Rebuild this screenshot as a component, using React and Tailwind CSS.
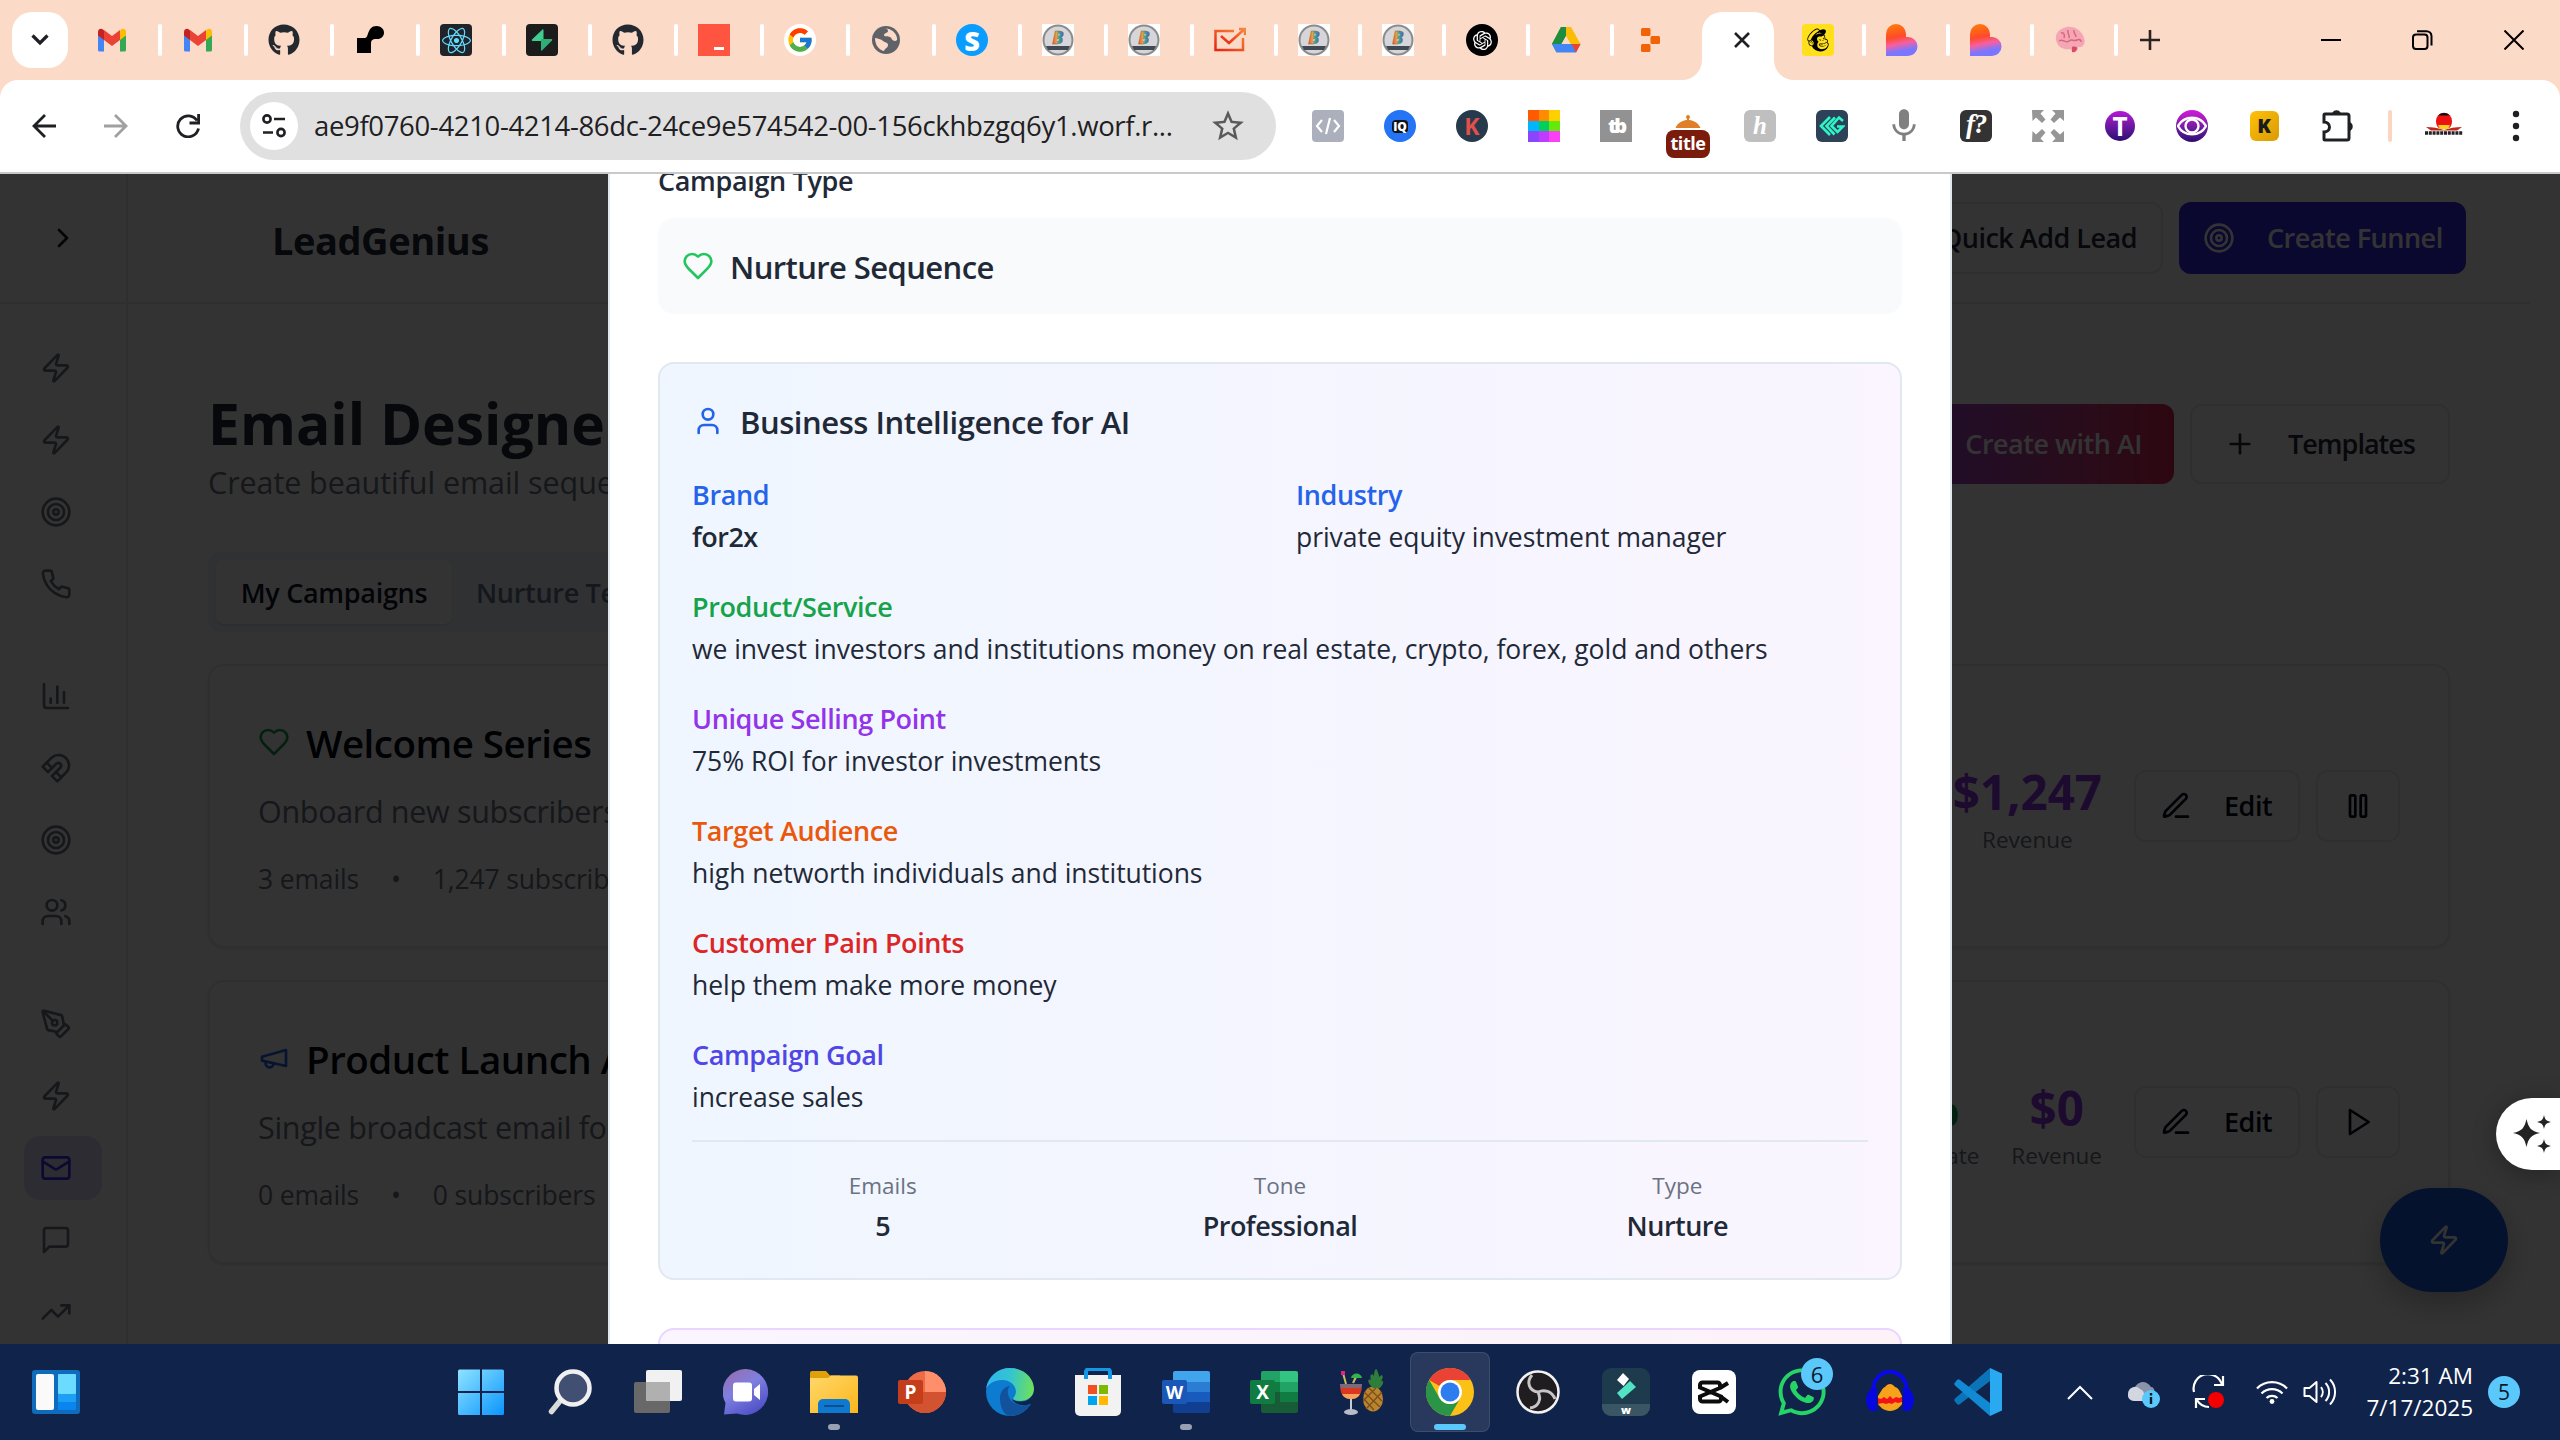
import React from "react";
import { FaGithub, FaReact, FaMailchimp, FaWhatsapp } from "react-icons/fa";
import { FcGoogle } from "react-icons/fc";
import { RiOpenaiFill } from "react-icons/ri";
import { MdMic, MdStarBorder } from "react-icons/md";

/* ---------- stroke icons ---------- */
function Icon({ children, size = 32, className = "", sw = 2 }) {
  return (
    <svg width={size} height={size} viewBox="0 0 24 24" fill="none" stroke="currentColor" strokeWidth={sw} strokeLinecap="round" strokeLinejoin="round" className={`shrink-0 ${className}`}>
      {children}
    </svg>
  );
}
const Zap = (p) => (
  <Icon {...p}><path d="M4 14a1 1 0 0 1-.78-1.63l9.9-10.2a.5.5 0 0 1 .86.46l-1.92 6.02A1 1 0 0 0 13 10h7a1 1 0 0 1 .78 1.63l-9.9 10.2a.5.5 0 0 1-.86-.46l1.92-6.02A1 1 0 0 0 11 14z" /></Icon>
);
const Target = (p) => (
  <Icon {...p}><circle cx="12" cy="12" r="10" /><circle cx="12" cy="12" r="6" /><circle cx="12" cy="12" r="2" /></Icon>
);
const Phone = (p) => (
  <Icon {...p}><path d="M22 16.92v3a2 2 0 0 1-2.18 2 19.79 19.79 0 0 1-8.63-3.07 19.5 19.5 0 0 1-6-6 19.79 19.79 0 0 1-3.07-8.67A2 2 0 0 1 4.11 2h3a2 2 0 0 1 2 1.72 12.84 12.84 0 0 0 .7 2.81 2 2 0 0 1-.45 2.11L8.09 9.91a16 16 0 0 0 6 6l1.27-1.27a2 2 0 0 1 2.11-.45 12.84 12.84 0 0 0 2.81.7A2 2 0 0 1 22 16.92z" /></Icon>
);
const Chart = (p) => (
  <Icon {...p}><path d="M3 3v16a2 2 0 0 0 2 2h16" /><path d="M18 17V9" /><path d="M13 17V5" /><path d="M8 17v-3" /></Icon>
);
const Magnet = (p) => (
  <Icon {...p}><path d="m6 15-4-4 6.75-6.77a7.79 7.79 0 0 1 11 11L13 22l-4-4 6.39-6.36a2.14 2.14 0 0 0-3-3L6 15" /><path d="m5 8 4 4" /><path d="m12 15 4 4" /></Icon>
);
const Users = (p) => (
  <Icon {...p}><path d="M16 21v-2a4 4 0 0 0-4-4H6a4 4 0 0 0-4 4v2" /><circle cx="9" cy="7" r="4" /><path d="M22 21v-2a4 4 0 0 0-3-3.87" /><path d="M16 3.13a4 4 0 0 1 0 7.75" /></Icon>
);
const PenTool = (p) => (
  <Icon {...p}><path d="M15.707 21.293a1 1 0 0 1-1.414 0l-1.586-1.586a1 1 0 0 1 0-1.414l5.586-5.586a1 1 0 0 1 1.414 0l1.586 1.586a1 1 0 0 1 0 1.414z" /><path d="m18 13-1.375-6.874a1 1 0 0 0-.746-.776L3.235 2.028a1 1 0 0 0-1.207 1.207L5.35 15.879a1 1 0 0 0 .776.746L13 18" /><path d="m2.3 2.3 7.286 7.286" /><circle cx="11" cy="11" r="2" /></Icon>
);
const Mail = (p) => (
  <Icon {...p}><rect width="20" height="16" x="2" y="4" rx="2" /><path d="m22 7-8.97 5.7a1.94 1.94 0 0 1-2.06 0L2 7" /></Icon>
);
const Message = (p) => (
  <Icon {...p}><path d="M21 15a2 2 0 0 1-2 2H7l-4 4V5a2 2 0 0 1 2-2h14a2 2 0 0 1 2 2z" /></Icon>
);
const Trending = (p) => (
  <Icon {...p}><path d="M22 7 13.5 15.5 8.5 10.5 2 17" /><path d="M16 7h6v6" /></Icon>
);
const Heart = (p) => (
  <Icon {...p}><path d="M19 14c1.49-1.46 3-3.21 3-5.5A5.5 5.5 0 0 0 16.5 3c-1.76 0-3 .5-4.5 2-1.5-1.5-2.74-2-4.5-2A5.5 5.5 0 0 0 2 8.5c0 2.3 1.5 4.05 3 5.5l7 7Z" /></Icon>
);
const Megaphone = (p) => (
  <Icon {...p}><path d="m3 11 18-5v12L3 14v-3z" /><path d="M11.6 16.8a3 3 0 1 1-5.8-1.6" /></Icon>
);
const Pen = (p) => (
  <Icon {...p}><path d="M12 20h9" /><path d="M16.376 3.622a1 1 0 0 1 3.002 3.002L7.368 18.635a2 2 0 0 1-.855.506l-2.872.838a.5.5 0 0 1-.62-.62l.838-2.872a2 2 0 0 1 .506-.854z" /></Icon>
);
const Pause = (p) => (
  <Icon {...p}><rect x="14" y="4" width="4" height="16" rx="1" /><rect x="6" y="4" width="4" height="16" rx="1" /></Icon>
);
const Play = (p) => (
  <Icon {...p}><path d="M6 3 20 12 6 21Z" /></Icon>
);
const Plus = (p) => (
  <Icon {...p}><path d="M5 12h14M12 5v14" /></Icon>
);
const User = (p) => (
  <Icon {...p}><path d="M19 21v-2a4 4 0 0 0-4-4H9a4 4 0 0 0-4 4v2" /><circle cx="12" cy="7" r="4" /></Icon>
);
const Chevron = (p) => (
  <Icon {...p}><path d="m9 18 6-6-6-6" /></Icon>
);

/* ---------- favicons ---------- */
const Gmail = () => (
  <svg width="32" height="32" viewBox="0 0 32 32">
    <path d="M2 8v18a1.5 1.5 0 0 0 1.500 1.500H8V13z" fill="#4285f4" />
    <path d="M24 13v14.500h4.500A1.500 1.500 0 0 0 30 26V8z" fill="#34a853" />
    <path d="M24 7v9l6-4.500V8c0-3-3-4-5-2.500z" fill="#fbbc04" />
    <path d="M8 16V6l8 6 8-6v10l-8 6z" fill="#ea4335" />
    <path d="M2 8v3.500L8 16V6.500L7 5.500C5 4 2 5 2 8z" fill="#c5221f" />
  </svg>
);
const Render = () => (
  <svg width="32" height="32" viewBox="0 0 32 32">
    <path d="M3 29V14h8c4 0 2-12 11.500-12C27 2 30 5 30 8.500c0 4-3 6.500-6.500 6.500-4 0-6.500 0-6.500 5v9z" fill="#000" />
  </svg>
);
const ReactTab = () => (
  <div className="flex h-8 w-8 items-center justify-center rounded-sm bg-[#20232a] text-[#61dafb]"><FaReact size={29} /></div>
);
const Supabase = () => (
  <svg width="32" height="32" viewBox="0 0 32 32">
    <rect width="32" height="32" rx="4" fill="#1c1c1c" />
    <path d="M17.500 6v11H6.500c-.8 0-1-.8-.5-1.500L16.500 5.500c.5-.5 1-.3 1 .5z" fill="#3ecf8e" />
    <path d="M15 26V15h10.500c.8 0 1 .8.500 1.500L16 26.500c-.500.500-1 .3-1-.5z" fill="#2fae78" />
  </svg>
);
const Github = () => <FaGithub size={32} color="#24292f" />;
const RedTab = () => (
  <div className="flex h-8 w-8 items-end justify-end bg-[#ff5440] pr-1.5 pb-1.5"><div className="h-[3px] w-2.5 bg-white" /></div>
);
const GoogleTab = () => (
  <div className="flex h-8 w-8 items-center justify-center rounded-full bg-white"><FcGoogle size={28} /></div>
);
const Globe = () => (
  <svg width="32" height="32" viewBox="0 0 32 32">
    <circle cx="16" cy="16" r="14" fill="#5f6368" />
    <path d="M5 14c4 1 6 1 8 3s5 1 5 4-3 3-4 6c-5-1-9-6-9-13zM13 5c3-1 5 0 5 2s-4 2-4 4 4 1 6 2 2 4 5 4 2-3 2-3c-1-6-8-11-14-9z" fill="#fddac8" />
  </svg>
);
const STab = () => (
  <div className="flex h-8 w-8 items-center justify-center rounded-full bg-[#0a9dff] text-[27px] leading-none font-extrabold text-white">S</div>
);
const BTab = () => (
  <svg width="32" height="32" viewBox="0 0 32 32">
    <defs>
      <linearGradient id="rainbow" x1="0" x2="1"><stop offset="0" stopColor="#f04a4a" /><stop offset=".35" stopColor="#e9a13a" /><stop offset=".6" stopColor="#24a6a6" /><stop offset="1" stopColor="#7b4bb0" /></linearGradient>
    </defs>
    <rect width="32" height="32" fill="#fff" />
    <circle cx="16" cy="16" r="14.500" fill="#d6d6da" stroke="#8b8b8b" strokeWidth="2" />
    <text x="16" y="20" textAnchor="middle" fontSize="18" fontWeight="900" fontStyle="italic" fill="url(#rainbow)" stroke="#8a5b3a" strokeWidth=".3">B</text>
    <path d="M4 22h24l-2 4H6z" fill="#3f4a54" />
  </svg>
);
const CheckTab = () => (
  <svg width="32" height="32" viewBox="0 0 32 32" fill="none" strokeWidth="2.500">
    <defs><linearGradient id="ck" x1="0" y1="1" x2="1" y2="0"><stop offset="0" stopColor="#e8230f" /><stop offset="1" stopColor="#f58a3c" /></linearGradient></defs>
    <path d="M20 7H1.500v19H29V14" stroke="url(#ck)" />
    <path d="M7 12l8 7L30 5.500M25 5h6v6" stroke="url(#ck)" />
  </svg>
);
const OpenAiTab = () => (
  <div className="flex h-8 w-8 items-center justify-center rounded-full bg-black text-white"><RiOpenaiFill size={23} /></div>
);
const Drive = () => (
  <svg width="32" height="32" viewBox="0 0 32 32">
    <path d="M11 3h10L11.500 20 6.500 28.500 2 20z" fill="#34a853" />
    <path d="M11 3h10l9.500 17H20.500z" fill="#fbbc04" />
    <path d="M11 3h5v9L11.500 20H2z" fill="#1e8e3e" />
    <path d="M16 12 11.500 20h9z" fill="#fddac8" />
    <path d="M2 20h28.500L26 28.500H6.500z" fill="#4285f4" />
    <path d="M21.500 20h9L26 28.500z" fill="#ea4335" />
  </svg>
);
const Replit = () => (
  <svg width="32" height="32" viewBox="0 0 32 32" fill="#f26207">
    <rect x="7" y="4" width="9.500" height="8" rx="1.500" /><rect x="16.500" y="12" width="9.500" height="8" rx="1.500" /><rect x="7" y="20" width="9.500" height="8" rx="1.500" />
  </svg>
);
const Mailchimp = () => (
  <div className="flex h-8 w-8 items-center justify-center rounded-sm bg-[#ffe01b]"><FaMailchimp size={26} /></div>
);
const Lovable = () => (
  <svg width="32" height="32" viewBox="0 0 32 32">
    <defs><linearGradient id="lv" x1=".3" y1="0" x2=".5" y2="1"><stop offset="0" stopColor="#ff7a0a" /><stop offset=".4" stopColor="#ff4a2a" /><stop offset=".62" stopColor="#f660a0" /><stop offset=".85" stopColor="#7a76ff" /></linearGradient></defs>
    <path d="M0 32V10a10 10 0 0 1 20 0v3h2a9.500 9.500 0 0 1 0 19z" fill="url(#lv)" />
  </svg>
);
const Brain = () => (
  <svg width="32" height="32" viewBox="0 0 32 32">
    <path d="M3 19C-1 10 6 4 13 3c8-1 15 4 17 11 2 6-1 10-6 9 0 4-2 6-5 5l-3-3C11 26 5 24 3 19z" fill="#f4a6b4" />
    <path d="M7 9c3-1 4 2 3 5M14 6c-1 4 2 4 1 8M20 6c-1 3 2 4 2 7M5 17c4-3 7 3 10 0s4 1 8-1 4 2 4 2" fill="none" stroke="#d9667d" strokeWidth="1.500" />
    <path d="M18 23c3-1 6 0 5 2s-3 4-5 3z" fill="#dc4a64" />
  </svg>
);

function Tab({ children, wide, bar = true }) {
  return (
    <div className={`flex h-8 shrink-0 items-center justify-between pl-5 ${wide ? "w-[86px]" : "w-[84px]"}`}>
      {children}
      {bar && <div className="h-8 w-1 rounded-full bg-white" />}
    </div>
  );
}

function TabStrip() {
  const wide = [Gmail, Gmail, Github, Render, ReactTab, Supabase, Github, RedTab, GoogleTab, Globe, STab, BTab, BTab];
  const mid = [CheckTab, BTab, BTab, OpenAiTab, Drive];
  const end = [Mailchimp, Lovable, Lovable, Brain];
  return (
    <div className="flex h-20 items-center bg-[#fcdac8]">
      <div className="mr-2 ml-3 flex h-14 w-14 shrink-0 items-center justify-center rounded-[20px] bg-white">
        <svg width="18" height="12" viewBox="0 0 18 12" fill="none" stroke="#1f2023" strokeWidth="3.200"><path d="M1.500 1.500 9 9l7.500-7.500" /></svg>
      </div>
      {wide.map((C, i) => <Tab key={i} wide><C /></Tab>)}
      {mid.map((C, i) => <Tab key={i}><C /></Tab>)}
      <Tab wide bar={false}><Replit /></Tab>
      <div className="relative ml-0.5 flex h-[68px] w-[72px] shrink-0 items-center justify-center self-end rounded-t-[20px] bg-white pb-3 pl-2">
        <svg className="absolute bottom-0 -left-5" width="20" height="20"><path d="M20 0v20H0A20 20 0 0 0 20 0z" fill="#fff" /></svg>
        <svg className="absolute -right-5 bottom-0" width="20" height="20"><path d="M0 0v20h20A20 20 0 0 1 0 0z" fill="#fff" /></svg>
        <svg width="16" height="16" viewBox="0 0 16 16" fill="none" stroke="#1f2023" strokeWidth="2.600"><path d="m1 1 14 14M15 1 1 15" /></svg>
      </div>
      <div className="w-2 shrink-0" />
      {end.map((C, i) => <Tab key={i}><C /></Tab>)}
      <svg className="ml-[22px] shrink-0" width="20" height="20" viewBox="0 0 20 20" stroke="#2b2422" strokeWidth="2.600"><path d="M0 10h20M10 0v20" /></svg>
      <svg className="ml-[161px] shrink-0" width="20" height="20" viewBox="0 0 20 20" stroke="#000" strokeWidth="2"><path d="M0 10h20" /></svg>
      <svg className="ml-[71px] shrink-0" width="21" height="20" viewBox="0 0 21 20" fill="none" stroke="#000" strokeWidth="2"><rect x="1" y="4.500" width="14.500" height="14.500" rx="3" /><path d="M5 1.200h9.500A5 5 0 0 1 19.500 6v9.500" /></svg>
      <svg className="ml-[71px] shrink-0" width="20" height="20" viewBox="0 0 20 20" stroke="#000" strokeWidth="2"><path d="m.5.5 19 19M19.500.5l-19 19" /></svg>
    </div>
  );
}

/* ---------- extension icons ---------- */
const extIcons = [
  () => (
    <div className="flex h-8 w-8 items-center justify-center rounded-sm bg-[#abb0bc] text-white"><svg width="26" height="18" viewBox="0 0 26 18" fill="none" stroke="currentColor" strokeWidth="2.200"><path d="M7 3 2 9l5 6M19 3l5 6-5 6M15 1l-4 16" /></svg></div>
  ),
  () => (
    <div className="flex h-8 w-8 items-center justify-center rounded-full bg-[#2474f5]"><span className="rounded-sm bg-[#10131a] px-px text-[12px] leading-[13px] font-extrabold text-white">IQ</span></div>
  ),
  () => <div className="flex h-8 w-8 items-center justify-center rounded-full bg-[#273a4b] text-[23px] leading-none font-bold text-[#e2504c]">K</div>,
  () => (
    <div className="grid h-8 w-8 grid-cols-3 overflow-hidden">
      <i className="bg-[#ff5a00]" /><i className="bg-[#ff8c00]" /><i className="bg-[#ffd000]" />
      <i className="bg-[#00b7ff]" /><i className="bg-[#00cf5d]" /><i className="bg-[#63ea0c]" />
      <i className="bg-[#8a45ff]" /><i className="bg-[#bd3cff]" /><i className="bg-[#fb40f5]" />
    </div>
  ),
  () => <div className="flex h-8 w-8 items-center justify-center bg-[#929292] text-[20px] leading-none font-extrabold tracking-[-3px] text-white">tb</div>,
  () => (
    <div className="mt-1.5 flex h-11 w-11 shrink-0 flex-col items-center">
      <svg width="26" height="15" viewBox="0 0 26 15" fill="#e07f27" className="mt-2 shrink-0"><circle cx="13" cy="2" r="2" /><path d="M12 3h2v2c6 .5 10 4 11.500 8h-25C2 9 6 5.500 12 5z" /></svg>
      <div className="flex h-7 w-11 shrink-0 items-center justify-center rounded-lg bg-[#7a1c0c] pb-0.5 text-[18px] leading-none font-bold tracking-tight text-white">title</div>
    </div>
  ),
  () => <div className="flex h-8 w-8 items-center justify-center rounded-md bg-[#bfbfbf] pb-0.5 font-['Liberation_Serif'] text-[25px] leading-none font-bold text-white italic">h</div>,
  () => (
    <div className="flex h-8 w-8 items-center justify-center rounded-md bg-[#2d4159]"><svg width="26" height="22" viewBox="0 0 26 22" fill="none" stroke="#2ef5c5" strokeWidth="2.600"><path d="M11 2 2 11l9 9M16 2.500 7.500 11l8 8.500M24 6l-4-3.500L12.500 11l6 6 5.500-5.500h-6" /></svg></div>
  ),
  () => <MdMic size={40} color="#808080" />,
  () => <div className="flex h-8 w-8 items-center justify-center rounded-md bg-[#333] pb-1 font-['Liberation_Serif'] text-[27px] leading-none font-bold tracking-tighter text-white italic">f?</div>,
  () => (
    <svg width="32" height="32" viewBox="0 0 32 32" fill="#969696"><path d="M0 0h12L8.500 3.500l5 6-3.500 3.500L4 7.500.5 11zM32 0H20l3.500 3.500-5 6L22 13l6-5.500 4 3.500zM0 32h12l-3.500-3.500 5-6L10 19l-6 5.500L.5 21zM32 32H20l3.500-3.500-5-6L22 19l6 5.500 4-3.500z" /></svg>
  ),
  () => <div className="flex h-[30px] w-[30px] items-center justify-center rounded-full bg-linear-to-b from-[#b815d8] to-[#2b0c70] text-[26px] leading-none font-bold text-white">T</div>,
  () => (
    <div className="flex h-8 w-8 items-center justify-center rounded-full bg-linear-to-b from-[#d416dc] to-[#2d0c72]"><svg width="30" height="20" viewBox="0 0 30 20" fill="none" stroke="#fff" strokeWidth="2.400"><path d="M1 10C7-1 23-1 29 10 23 21 7 21 1 10z" /><circle cx="15" cy="10" r="6.500" /></svg></div>
  ),
  () => <div className="flex h-[30px] w-[29px] items-center justify-center rounded-md bg-linear-to-br from-[#ffc107] to-[#d99a06] text-[20px] leading-none font-extrabold text-[#1b1b1b]">K</div>,
];

function Toolbar() {
  return (
    <div className="h-[94px] bg-[#fcdac8]">
      <div className="flex h-[94px] items-center rounded-t-[18px] border-b-2 border-[#c9c9c9] bg-white text-[#1f2023]">
        <svg className="ml-8 shrink-0" width="24" height="24" viewBox="0 0 24 24" fill="none" stroke="currentColor" strokeWidth="2.800"><path d="M24 12H2M13 1 2 12l11 11" /></svg>
        <svg className="ml-12 shrink-0 text-[#a0a0a0]" width="24" height="24" viewBox="0 0 24 24" fill="none" stroke="currentColor" strokeWidth="2.800"><path d="M0 12h22M11 1l11 11-11 11" /></svg>
        <svg className="ml-12 shrink-0" width="24" height="24" viewBox="0 0 24 24" fill="none" stroke="currentColor" strokeWidth="2.800"><path d="M22.500 14.500A10.500 10.500 0 1 1 21 6.500M22.600 0v9H13.500" /></svg>
        <div className="ml-10 flex h-[68px] w-[1036px] shrink-0 items-center rounded-full bg-[#e0e0e0] pl-2.5">
          <div className="flex h-12 w-12 shrink-0 items-center justify-center rounded-full bg-white">
            <svg width="24" height="24" viewBox="0 0 24 24" fill="none" stroke="currentColor" strokeWidth="2.600"><circle cx="5" cy="5" r="3.600" /><path d="M12 5h11M1 18.500h10" /><circle cx="19" cy="18.500" r="3.600" /></svg>
          </div>
          <span className="ml-4 w-[880px] shrink-0 text-[27.500px] tracking-[-0.340px] whitespace-nowrap">ae9f0760-4210-4214-86dc-24ce9e574542-00-156ckhbzgq6y1.worf.r...</span>
          <MdStarBorder size={38} color="#5a5a5a" className="ml-[15px] shrink-0" />
        </div>
        <div className="ml-4 flex shrink-0 items-center">
          {extIcons.map((E, i) => <div key={i} className="flex h-11 w-[72px] shrink-0 items-center justify-center"><E /></div>)}
        </div>
        <svg className="ml-5 shrink-0" width="36" height="36" viewBox="0 0 36 36" fill="none" stroke="currentColor" strokeWidth="3"><path d="M5 6h22a2 2 0 0 1 2 2v22a2 2 0 0 1-2 2H5a1 1 0 0 1-1-1v-7c3 0 5.500-2 5.500-5S7 14 4 14V7a1 1 0 0 1 1-1z" /><path d="M13 5a4 4 0 0 1 7 0zM30 15a4 4 0 0 1 0 7z" fill="currentColor" strokeWidth="1.500" /></svg>
        <div className="ml-8 h-8 w-1 shrink-0 rounded bg-[#fcd5c0]" />
        <svg className="ml-8 shrink-0" width="40" height="36" viewBox="0 0 40 36">
          <path d="M12 13a8 8 0 0 1 16 0c0 3-1 6-3 7H15c-2-1-3-4-3-7z" fill="#ee1111" /><path d="M14 7.500a8 8 0 0 1 12 0z" fill="#140b08" /><path d="M14 17h12l-2 4h-8z" fill="#f8d21a" />
          <path d="M2 19c7 0 12 1 18 3 6-2 11-3 18-3l-5 3.500H7z" fill="#c5261c" />
          <path d="M1 25h38" stroke="#222" strokeWidth="3.500" strokeDasharray="3 .8" />
        </svg>
        <svg className="ml-12 shrink-0" width="8" height="34" viewBox="0 0 8 34" fill="currentColor"><circle cx="4" cy="5" r="3.200" /><circle cx="4" cy="17" r="3.200" /><circle cx="4" cy="29" r="3.200" /></svg>
      </div>
    </div>
  );
}

/* ---------- application page ---------- */
function Sidebar() {
  const groups = [[Zap, Zap, Target, Phone], [Chart, Magnet, Target, Users], [PenTool, Zap, Mail, Message, Trending]];
  return (
    <aside className="h-full w-32 shrink-0 border-r-2 border-[#e2e8f0]">
      <div className="flex h-[130px] items-center border-b-2 border-[#e2e8f0] pl-[47px] text-[#0f172a]"><Chevron /></div>
      <nav className="flex flex-col gap-12 pt-8 pl-6">
        {groups.map((g, i) => (
          <div key={i} className="flex flex-col gap-2">
            {g.map((C, j) => (
              <div key={j} className={`flex h-16 w-[78px] items-center rounded-2xl pl-4 ${C === Mail ? "bg-[#e1ddff] text-[#3c30f0]" : "text-[#6b7280]"}`}><C /></div>
            ))}
          </div>
        ))}
      </nav>
    </aside>
  );
}

function Stat({ value, label, color }) {
  return (
    <div className="mt-1 text-center whitespace-nowrap">
      <div className={`text-[47.500px] leading-[64px] font-bold ${color}`}>{value}</div>
      <div className="text-[22.500px] leading-8 text-[#6b7280]">{label}</div>
    </div>
  );
}

function Campaign({ icon, title, desc, emails, subs, stats, action }) {
  return (
    <div className="mb-8 flex h-[284px] items-center justify-between rounded-2xl border-2 border-[#e2e8f0] px-12 shadow-sm">
      <div className="whitespace-nowrap">
        <div className="flex h-14 items-center gap-4">
          {icon}
          <h3 className="mt-0.5 text-[38.500px] leading-[56px] font-semibold tracking-[-0.500px] text-[#030712]">{title}</h3>
        </div>
        <p className="mt-[17px] text-[30.500px] leading-[48px] tracking-[-0.320px] text-[#6b7280]">{desc}</p>
        <div className="mt-6 -mb-px flex text-[26.500px] leading-10 tracking-[-0.150px] text-[#6b7280]">
          <span>{emails}</span><span className="mx-8">•</span><span>{subs}</span>
        </div>
      </div>
      <div className="flex items-center gap-8">
        {stats.map((s) => <Stat key={s.label} {...s} />)}
        <div className="flex gap-4 text-[#020617]">
          <div className="flex h-[72px] w-[166px] items-center rounded-xl border-2 border-[#e2e8f0] pl-6"><Pen /><span className="mt-px ml-8 text-[27px] font-semibold tracking-[-0.500px]">Edit</span></div>
          <div className="flex h-[72px] w-[84px] items-center justify-center rounded-xl border-2 border-[#e2e8f0]">{action}</div>
        </div>
      </div>
    </div>
  );
}

function Page() {
  return (
    <div className="flex h-full w-[2530px]">
      <Sidebar />
      <main className="h-full flex-1">
        <header className="flex h-[130px] items-center justify-between border-b-2 border-[#e2e8f0] pr-16 pl-36">
          <h1 className="mt-1 text-[38px] font-bold tracking-[-0.450px] text-[#1f2937]">LeadGenius</h1>
          <div className="flex gap-4 text-[27px] font-semibold tracking-[-0.500px]">
            <div className="flex h-[72px] items-center rounded-xl border-2 border-[#e2e8f0] px-6 text-[#1f2937]"><Plus /><span className="mt-px ml-6">Quick Add Lead</span></div>
            <div className="flex h-[72px] w-[287px] items-center rounded-xl bg-[#3329eb] pl-6 text-white"><Target /><span className="mt-px ml-8 whitespace-nowrap">Create Funnel</span></div>
          </div>
        </header>
        <div className="pr-20 pl-20">
          <div className="flex h-[248px] justify-between">
            <div className="mt-[83px]">
              <h2 className="text-[57px] leading-[72px] font-bold text-[#1f2937]">Email Designer</h2>
              <p className="-mt-px text-[30.500px] leading-[48px] tracking-[-0.080px] text-[#6b7280]">Create beautiful email sequences</p>
            </div>
            <div className="mt-[100px] flex h-20 gap-4 text-[27px] font-semibold tracking-[-0.500px] whitespace-nowrap">
              <div className="flex items-center rounded-xl bg-linear-to-r from-[#9333ea] to-[#e2234f] px-8 text-white"><Zap /><span className="mt-px ml-8">Create with AI</span></div>
              <div className="flex w-[260px] items-center rounded-xl border-2 border-[#e2e8f0] pl-8 text-[#1f2937]"><Plus /><span className="mt-px ml-8 tracking-[-1px]">Templates</span></div>
            </div>
          </div>
          <div className="mb-8 flex h-20 w-[900px] items-center rounded-xl bg-[#f1f5f9] p-2 text-[27px] font-semibold tracking-[-0.300px] whitespace-nowrap">
            <div className="flex h-16 w-[236px] items-center justify-center rounded-lg bg-white pt-0.5 text-[#0f172a] shadow-sm">My Campaigns</div>
            <div className="px-6 pt-0.5 text-[#64748b]">Nurture Templates</div>
          </div>
          <Campaign
            icon={<Heart className="text-[#16a34a]" />}
            title="Welcome Series"
            desc="Onboard new subscribers"
            emails="3 emails"
            subs="1,247 subscribers"
            stats={[{ value: "$1,247", label: "Revenue", color: "text-[#9333ea]" }]}
            action={<Pause />}
          />
          <Campaign
            icon={<Megaphone className="text-[#2563eb]" />}
            title="Product Launch Alert"
            desc="Single broadcast email for launch"
            emails="0 emails"
            subs="0 subscribers"
            stats={[{ value: "0%", label: "Open Rate", color: "text-[#16a34a]" }, { value: "$0", label: "Revenue", color: "text-[#9333ea]" }]}
            action={<Play />}
          />
        </div>
      </main>
      <div className="absolute top-[1014px] right-[52px] flex h-[104px] w-32 items-center justify-center rounded-full bg-[#1d5be0] text-white shadow-[0_12px_30px_rgba(0,0,0,0.25)]"><Zap /></div>
    </div>
  );
}

function Field({ label, color, value, bold }) {
  return (
    <div className="h-28">
      <div className={`text-[27px] leading-10 font-semibold tracking-[-0.400px] ${color}`}>{label}</div>
      <div className={`mt-0.5 leading-10 ${bold ? "text-[27px] font-semibold tracking-[-0.500px]" : "text-[26.500px] tracking-[-0.050px]"}`}>{value}</div>
    </div>
  );
}

function Modal() {
  return (
    <div className="absolute inset-y-0 left-[608px] w-[1344px] overflow-hidden border-x-2 border-[#e2e8f0] bg-white px-12 text-[#1f2937]">
      <div className="-mt-[13px] text-[27px] leading-10 font-semibold tracking-[-0.350px]">Campaign Type</div>
      <div className="mt-[17px] flex h-24 items-center rounded-2xl bg-[#f9fafb] pl-6">
        <Heart className="text-[#22c55e]" />
        <span className="mt-0.5 ml-4 text-[31px] font-semibold tracking-[-0.600px]">Nurture Sequence</span>
      </div>
      <div className="mt-12 h-[918px] rounded-2xl border-2 border-[#e2e8f0] bg-linear-to-r from-[#eff6ff] to-[#faf5ff] px-8 pt-[33px]">
        <div className="flex h-12 items-center">
          <User className="text-[#2563eb]" />
          <span className="mt-px ml-4 text-[31px] leading-[48px] font-semibold tracking-[-0.450px]">Business Intelligence for AI</span>
        </div>
        <div className="mt-[30px] grid grid-cols-2 gap-x-8">
          <Field label="Brand" color="text-[#2563eb]" value="for2x" bold />
          <Field label="Industry" color="text-[#2563eb]" value="private equity investment manager" />
        </div>
        <Field label="Product/Service" color="text-[#16a34a]" value="we invest investors and institutions money on real estate, crypto, forex, gold and others" />
        <Field label="Unique Selling Point" color="text-[#9333ea]" value="75% ROI for investor investments" />
        <Field label="Target Audience" color="text-[#ea580c]" value="high networth individuals and institutions" />
        <Field label="Customer Pain Points" color="text-[#dc2626]" value="help them make more money" />
        <Field label="Campaign Goal" color="text-[#4f46e5]" value="increase sales" />
        <div className="-mt-[7px] grid grid-cols-3 gap-4 border-t-2 border-[#e2e8f0] pt-7 text-center">
          {[["Emails", "5"], ["Tone", "Professional"], ["Type", "Nurture"]].map(([a, b]) => (
            <div key={a}>
              <div className="text-[22.500px] leading-8 font-medium text-[#6b7280]">{a}</div>
              <div className="mt-1 text-[27px] leading-10 font-semibold tracking-[-0.500px]">{b}</div>
            </div>
          ))}
        </div>
      </div>
      <div className="mt-12 h-40 rounded-2xl border-2 border-[#e9d5ff] bg-linear-to-r from-[#faf5ff] to-[#fdf2f8]" />
    </div>
  );
}

/* ---------- taskbar ---------- */
const apps = [
  () => (
    <svg width="48" height="48" viewBox="0 0 48 48"><defs><linearGradient id="win" x1="0" y1="0" x2="1" y2="1"><stop offset="0" stopColor="#8fe3ff" /><stop offset="1" stopColor="#0a95ff" /></linearGradient></defs><path d="M1 3a1.500 1.500 0 0 1 1.500-1.500H23V23H1zM25 1.500h20.500A1.500 1.500 0 0 1 47 3v20H25zM1 25h22v22H2.500A1.500 1.500 0 0 1 1 45.500zM25 25h22v20.500a1.500 1.500 0 0 1-1.500 1.500H25z" fill="url(#win)" /></svg>
  ),
  () => (
    <svg width="44" height="48" viewBox="0 0 44 48"><path d="M12 33 3.500 43.500" stroke="#dadada" strokeWidth="5.500" strokeLinecap="round" /><circle cx="25" cy="20" r="16.500" fill="#414f73" stroke="#f0f0f0" strokeWidth="4.500" /></svg>
  ),
  () => (
    <svg width="48" height="48" viewBox="0 0 48 48"><rect y="14" width="36" height="31" rx="2" fill="#686868" /><rect x="12" y="2" width="36" height="31" rx="2" fill="#f1f1f1" /><path d="M12 14h24v19H14a2 2 0 0 1-2-2z" fill="#b0b0b0" /></svg>
  ),
  () => (
    <svg width="46" height="46" viewBox="0 0 46 46"><defs><linearGradient id="chat" x1="0" y1="0" x2=".6" y2="1"><stop offset="0" stopColor="#9a6ba8" /><stop offset=".5" stopColor="#7f7fe0" /><stop offset="1" stopColor="#5152c8" /></linearGradient></defs><path d="M23 0a23 23 0 1 1-9 44.500L1 45.500 2.500 34A23 23 0 0 1 23 0z" fill="url(#chat)" /><rect x="10" y="13.500" width="19" height="19" rx="3" fill="#fff" /><path d="m31 20 6-5v16l-6-5z" fill="#fff" /></svg>
  ),
  () => (
    <svg width="48" height="44" viewBox="0 0 48 44"><defs><linearGradient id="fld" x1="0" y1="0" x2="1" y2="1"><stop offset="0" stopColor="#ffd86b" /><stop offset="1" stopColor="#fcb61a" /></linearGradient></defs><path d="M0 3a2 2 0 0 1 2-2h14l4 4.500h10V12H0z" fill="#e0a007" /><path d="M0 8h18l3-2.500h25a2 2 0 0 1 2 2V43H0z" fill="url(#fld)" /><path d="M8 43V34a5 5 0 0 1 5-5h22a5 5 0 0 1 5 5v9z" fill="#0f79d0" /><path d="M14 36h20" stroke="#0a4f94" strokeWidth="2" /></svg>
  ),
  () => (
    <svg width="48" height="44" viewBox="0 0 48 44"><circle cx="27" cy="22" r="21" fill="#ed6c47" /><path d="M27 1a21 21 0 0 1 21 21H27z" fill="#ff8f6b" /><path d="M48 22a21 21 0 0 1-42 0z" fill="#d35230" /><rect y="10" width="25" height="24" rx="2" fill="#c43e1c" /><text x="12.500" y="29" textAnchor="middle" fontSize="19" fontWeight="700" fill="#fff">P</text></svg>
  ),
  () => (
    <svg width="48" height="48" viewBox="0 0 48 48"><defs><linearGradient id="ed" x1="0" y1=".3" x2="1" y2=".4"><stop offset="0" stopColor="#2fb6ee" /><stop offset=".5" stopColor="#33c4d0" /><stop offset="1" stopColor="#6ee05a" /></linearGradient></defs><circle cx="24" cy="24" r="24" fill="#0c7bd0" /><path d="M0 21C2 8 12 0 24 0c14 0 24 10 24 21 0 8-7 12-14 12-6 0-8-2-6-4 5-6 0-17-12-17C8 12 2 16 0 21z" fill="url(#ed)" /><path d="M14 30c0-7 5-12 10-12-3 3-3 8 0 13 4 6 13 8 20 5-4 8-12 12-20 12-7-1-10-10-10-18z" fill="#12529c" /><path d="M48 22v14l-4 0c-8 3-16 0-18-5 3 3 14 4 18-1 3-3 4-5 4-8z" fill="#10234b" /></svg>
  ),
  () => (
    <svg width="46" height="48" viewBox="0 0 46 48"><path d="M11 11V4a3 3 0 0 1 3-3h18a3 3 0 0 1 3 3v7" fill="none" stroke="#1397e6" strokeWidth="4" /><path d="M0 7h46v36a5 5 0 0 1-5 5H5a5 5 0 0 1-5-5z" fill="#f2f2f2" /><path d="M11 7v4M35 7v4" stroke="#1397e6" strokeWidth="4" /><path d="M13 17h9v9h-9z" fill="#f25022" /><path d="M24 17h9v9h-9z" fill="#7fba00" /><path d="M13 28h9v9h-9z" fill="#00a4ef" /><path d="M24 28h9v9h-9z" fill="#ffb900" /></svg>
  ),
  () => (
    <svg width="48" height="44" viewBox="0 0 48 44"><path d="M11 3a2 2 0 0 1 2-2h33a2 2 0 0 1 2 2v9H11z" fill="#41a5ee" /><path d="M11 12h37v10H11z" fill="#2b7cd3" /><path d="M11 22h37v10H11z" fill="#185abd" /><path d="M11 32h37v9a2 2 0 0 1-2 2H13a2 2 0 0 1-2-2z" fill="#103f91" /><rect y="10" width="25" height="24" rx="2" fill="#1a57b6" /><text x="12.500" y="28.500" textAnchor="middle" fontSize="18" fontWeight="700" fill="#fff">W</text></svg>
  ),
  () => (
    <svg width="48" height="44" viewBox="0 0 48 44"><path d="M11 3a2 2 0 0 1 2-2h17v11H11z" fill="#21a366" /><path d="M30 1h16a2 2 0 0 1 2 2v9H30z" fill="#33c481" /><path d="M11 12h19v10H11z" fill="#107c41" /><path d="M30 12h18v10H30z" fill="#21a366" /><path d="M30 22h18v10H30z" fill="#107c41" /><path d="M11 22h19v10h18v9a2 2 0 0 1-2 2H13a2 2 0 0 1-2-2z" fill="#185c37" /><rect y="10" width="25" height="24" rx="2" fill="#107c41" /><text x="12.500" y="28.500" textAnchor="middle" fontSize="19" fontWeight="700" fill="#fff">X</text></svg>
  ),
  () => (
    <svg width="46" height="48" viewBox="0 0 46 48"><ellipse cx="34" cy="31" rx="10" ry="12.500" fill="#b8842f" /><path d="m25 24 16 15M24 30l11 12M30 20l13 13M43 24 27 41M37 20 24 33" stroke="#7b4d17" strokeWidth="1.200" /><path d="M34 20C27 14 29 10 32 12c-2-5 1-8 3-4 0-5 2-9 3-6 2 4 2 6 2 7 4-4 5 0 2 4 3-1 3 3-1 7z" fill="#2e7d3a" /><path d="M1 16h22c0 8-4 15-11 15S1 24 1 16z" fill="#7d6a78" /><path d="M1.500 20h21c0 7-4 11-10.500 11S1.500 27 1.500 20z" fill="#d9371f" /><path d="M3 26h18c-2 4-5 5-9 5s-7-1-9-5z" fill="#f5a35c" /><path d="M12 31v12" stroke="#c9c9d4" strokeWidth="2" /><ellipse cx="12" cy="44" rx="7" ry="3" fill="#b9bcc8" /><path d="M7 16 4 5M14 15l4-8" stroke="#c9c05a" strokeWidth="2" /><path d="M12 10c1-6 10-6 11 0z" fill="#35b34a" /><rect x="2" y="3" width="4" height="4" fill="#e0218a" /></svg>
  ),
  () => (
    <svg width="48" height="48" viewBox="0 0 48 48"><circle cx="24" cy="24" r="24" fill="#fbc116" /><path d="M3.200 12A24 24 0 0 1 44.800 12H24a12 12 0 0 0-10.500 6z" fill="#ea4335" /><path d="M3.200 12A24 24 0 0 0 24 48l10.400-18A12 12 0 0 1 13.600 30z" fill="#2a9447" /><circle cx="24" cy="24" r="12" fill="#fff" /><circle cx="24" cy="24" r="9.500" fill="#2d7df0" /></svg>
  ),
  () => (
    <svg width="44" height="44" viewBox="0 0 44 44"><circle cx="22" cy="22" r="20.500" fill="#1f1d1f" stroke="#f2f2f2" strokeWidth="2.500" /><path d="M16 5c-6 7-3 16 6 17M39 29c-3-8-11-10-17-7M14 38c8-1 12-8 8-16" fill="none" stroke="#c6c4c6" strokeWidth="3" /></svg>
  ),
  () => (
    <svg width="48" height="48" viewBox="0 0 48 48"><rect width="48" height="48" rx="9" fill="#1d3b4d" /><path d="M0 36h48v3a9 9 0 0 1-9 9H9a9 9 0 0 1-9-9z" fill="#3a5563" /><path d="m21 5 6 6-5.500 7L15 12z" fill="#fff" /><path d="m28 13 6 6-14 12-5-6z" fill="#52e3c2" /><text x="24" y="46" textAnchor="middle" fontSize="11" fontWeight="900" fill="#fff">w</text></svg>
  ),
  () => (
    <svg width="44" height="44" viewBox="0 0 44 44"><rect width="44" height="44" rx="8" fill="#fff" /><path d="M36 13 28 18M28 26l8 6M28 17.500V15a2.500 2.500 0 0 0-2.500-2.500h-15A2.500 2.500 0 0 0 8 15v2.500l21 9V29a2.500 2.500 0 0 1-2.500 2.500h-16A2.500 2.500 0 0 1 8 29v-2.500l21-9" fill="none" stroke="#0c0c0c" strokeWidth="4" /></svg>
  ),
  () => (
    <div className="relative"><FaWhatsapp size={54} color="#25d366" /><div className="absolute -top-[7px] right-0 -mr-1 flex h-8 w-8 items-center justify-center rounded-full bg-[#5ac8fa] text-[22px] leading-none text-[#0c1a2e]">6</div></div>
  ),
  () => (
    <svg width="48" height="44" viewBox="0 0 48 44"><path d="M7 25C5-6 43-6 41 25" fill="none" stroke="#0808e8" strokeWidth="4" /><path d="M8 18c-10 3-10 18-3 23h6V18zM40 18c10 3 10 18 3 23h-6V18z" fill="#0606e0" /><path d="M12 26c3-4 4-8 7-9 3-4 7-4 10 0 4 1 5 5 7 9v8c-2 3-6 7-12 7s-10-4-12-7z" fill="#f6a21b" /><path d="M12 28l3 1 3-2 3 2 3-3 3 3 3-2 3 1 3-1v5l-4 1-3-1-3 2-3-1-3 1-3-1-5 1z" fill="#f3121a" /></svg>
  ),
  () => (
    <svg width="48" height="48" viewBox="0 0 48 48"><path d="M36 0 48 5.500v37L36 48z" fill="#29a9f0" /><path d="M36 0v13L6 36c-1 1-2 1-3 0l-2-2.500c-1-1-1-2 0-3z" fill="#0b74b8" /><path d="M36 48V35L6 12c-1-1-2-1-3 0L1 14.500c-1 1-1 2 0 3z" fill="#1289d3" /></svg>
  ),
];

function Taskbar() {
  return (
    <div className="flex h-24 items-center bg-[#10234b] text-white">
      <svg className="ml-8 shrink-0" width="48" height="44" viewBox="0 0 48 44"><rect width="48" height="44" rx="3" fill="#0f6cbd" /><rect x="4" y="4" width="18" height="36" rx="2" fill="#fafafa" /><rect x="26" y="4" width="18" height="20" rx="1" fill="#6bdcff" /><rect x="26" y="24" width="18" height="8" fill="#1ba0f5" /><rect x="26" y="32" width="18" height="8" rx="1" fill="#0a84ee" /></svg>
      <div className="ml-[356px] flex shrink-0">
        {apps.map((A, i) => (
          <div key={i} className={`relative flex h-20 items-center justify-center ${i === 0 ? "w-[89px]" : i === 1 ? "w-[89px]" : "w-[88px]"}`}>
            {i === 11 && <div className="absolute inset-y-0 left-1 w-20 rounded-lg border border-white/10 bg-white/10" />}
            <div className="relative"><A /></div>
            {i === 11 && <div className="absolute bottom-0.5 left-7 h-1.5 w-8 rounded-full bg-[#5ac8fa]" />}
            {(i === 4 || i === 8) && <div className="absolute bottom-0.5 left-[38px] h-1.5 w-3 rounded-full bg-[#98a0b3]" />}
          </div>
        ))}
      </div>
      <div className="ml-[26px] flex w-16 shrink-0 justify-center"><svg width="26" height="15" viewBox="0 0 26 15" fill="none" stroke="#fff" strokeWidth="2"><path d="m1 14 12-12 12 12" /></svg></div>
      <div className="flex w-16 shrink-0 justify-center">
        <svg width="32" height="28" viewBox="0 0 32 28" className="mt-1"><path d="M6 11a9 9 0 0 1 17-4c3 0 4 3 3 8l-12 6z" fill="#8a93a9" /><path d="M0 14a7 7 0 0 1 12-5c4 1 5 5 4 12H6a6 6 0 0 1-6-7z" fill="#d2d6df" /><circle cx="23" cy="19" r="9" fill="#5ac8fa" /><path d="M23 17v7M23 13v2.500" stroke="#0c1a2e" strokeWidth="2.400" /></svg>
      </div>
      <div className="flex w-[66px] shrink-0 justify-center">
        <svg width="34" height="34" viewBox="0 0 34 34" fill="none" stroke="#fff" strokeWidth="2.200"><path d="M2 17A14 14 0 0 1 30 10M31 1v9h-9M17 32A14 14 0 0 1 5 25M4 33v-9h9" /><circle cx="24" cy="25" r="8" fill="#f50000" stroke="none" /></svg>
      </div>
      <div className="flex w-[60px] shrink-0 justify-center">
        <svg width="32" height="24" viewBox="0 0 32 24" fill="none" stroke="#fff" strokeWidth="2.200"><path d="M1 8.500a21 21 0 0 1 30 0M5.500 13.500a15 15 0 0 1 21 0M10.500 18a8 8 0 0 1 11 0" /><circle cx="16" cy="21.500" r="2.400" fill="#fff" stroke="none" /></svg>
      </div>
      <div className="flex w-9 shrink-0 justify-center">
        <svg width="34" height="28" viewBox="0 0 34 28" fill="none" stroke="#fff" strokeWidth="2"><path d="M1.500 10v8h5l7 6V4l-7 6z" strokeLinejoin="round" /><path d="M18 9a8 8 0 0 1 0 10M22.500 5a13 13 0 0 1 0 18M27 1.500a18 18 0 0 1 0 25" /></svg>
      </div>
      <div className="w-[135px] shrink-0 text-right text-[22.500px] leading-8"><div>2:31 AM</div><div>7/17/2025</div></div>
      <div className="ml-[15px] flex h-8 w-8 shrink-0 items-center justify-center rounded-full bg-[#5ac8fa] text-[21px] leading-none text-[#0c1a2e]">5</div>
    </div>
  );
}

export default function App() {
  return (
    <div className="flex h-[1440px] w-[2560px] flex-col overflow-hidden bg-white font-['Open_Sans','Noto_Sans',sans-serif]">
      <TabStrip />
      <Toolbar />
      <div className="relative h-[1170px] overflow-hidden bg-white">
        <Page />
        <div className="absolute inset-0 bg-black/80" />
        <Modal />
        <div className="absolute top-[924px] right-0 h-[72px] w-16 rounded-l-full bg-white shadow-[0_4px_24px_rgba(0,0,0,0.3)]">
          <svg className="mt-[17px] ml-[17px]" width="38" height="38" viewBox="0 0 38 38" fill="#232323"><path d="M13.500 4c2 9 4.500 12 13.500 14-9 2-11.500 5-13.500 14C11.500 23 9 20 0 18 9 16 11.500 13 13.500 4zM31 0c1 4.500 2 6 7 7-5 1-6 2.500-7 7-1-4.500-2-6-7-7 5-1 6-2.500 7-7zM31 24c1 4.500 2 6 7 7-5 1-6 2.500-7 7-1-4.500-2-6-7-7 5-1 6-2.500 7-7z" /></svg>
        </div>
      </div>
      <Taskbar />
    </div>
  );
}
